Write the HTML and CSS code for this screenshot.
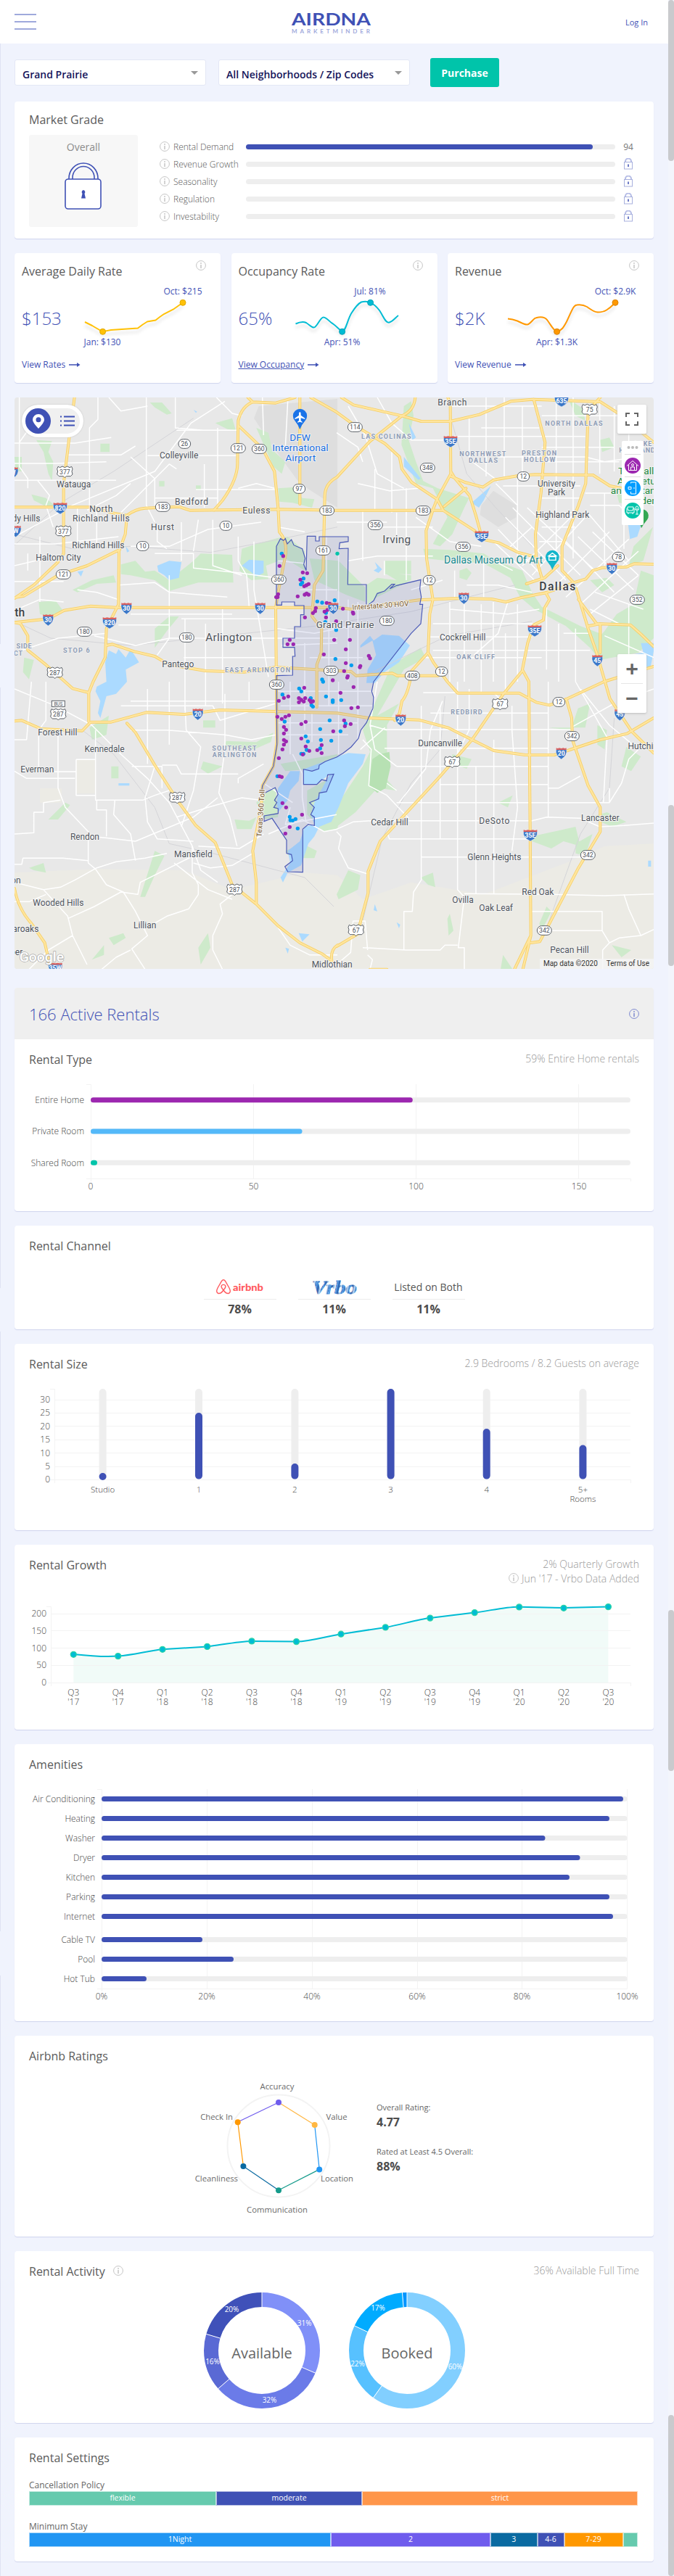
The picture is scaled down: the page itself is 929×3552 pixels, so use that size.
FILE: index.html
```html
<!DOCTYPE html>
<html lang="en">
<head>
<meta charset="utf-8">
<title>AirDNA MarketMinder - Grand Prairie</title>
<link rel="stylesheet" href="styles.css">
</head>
<body>
<svg class="sprite" width="0" height="0" aria-hidden="true">
  <defs>
    <symbol id="info" viewBox="0 0 14 14"><circle cx="7" cy="7" r="6.4" fill="none" stroke="currentColor"/><circle cx="7" cy="4" r=".9" fill="currentColor"/><path d="M7 6v5" stroke="currentColor" stroke-width="1.5"/></symbol>
    <symbol id="lock" viewBox="0 0 12 16"><path d="M2 6V4.500a4 4 0 0 1 8 0V6" fill="none" stroke="#b6bde6" stroke-width="2"/><rect x=".5" y="5.500" width="11" height="9.500" fill="#fff" stroke="#a8b0de"/><path d="M6 8.500v3.500" stroke="#3f51b5" stroke-width="1.500"/></symbol>
    <symbol id="arrow" viewBox="0 0 16 8"><path d="M0 4H14" stroke="currentColor" stroke-width="1.400"/><path d="M11 1l4.500 3L11 7z" fill="currentColor"/></symbol>
    <g id="sr2"><rect x="-25" y="-19" width="50" height="38" rx="19" fill="#fff" stroke="#5a5f66" stroke-width="3"/></g>
    <g id="sr3"><rect x="-30" y="-19" width="60" height="38" rx="19" fill="#fff" stroke="#5a5f66" stroke-width="3"/></g>
    <g id="us"><path d="M-28-22l8 4 10-5 10 5 10-5 10 5 8-4 4 10-3 10 3 12-8 8H6L0 24l-6-6h-18l-8-8 3-12-3-10z" fill="#fff" stroke="#5a5f66" stroke-width="3"/></g>
    <g id="ih"><path d="M-22-15H22Q26 8 0 25-26 8-22-15z" fill="#3c78c8" stroke="#fff" stroke-width="1.500"/><path d="M-21-22l6 2 7-2 8 2 8-2 7 2 6-2v8h-42z" fill="#d9605f"/></g>
    <g id="ih3"><path d="M-29-15H29Q31 10 0 25-31 10-29-15z" fill="#3c78c8" stroke="#fff" stroke-width="1.500"/><path d="M-28-22l9 2 9-2 10 2 10-2 9 2 9-2v8h-56z" fill="#d9605f"/></g>
  </defs>
</svg>
<i class="edge edge-a"></i><i class="edge edge-b"></i><i class="edge edge-c"></i><i class="edge edge-d"></i>
<div class="track"><i class="thumb thumb-a"></i><i class="thumb thumb-b"></i><i class="thumb thumb-c"></i><i class="thumb thumb-d"></i></div>

<header class="topbar">
  <div class="menu"><i></i><i></i><i></i></div>
  <div class="brand"><svg width="112" height="40"><text class="logo-main" x="1" y="24.500" textLength="109" lengthAdjust="spacingAndGlyphs">AIRDNA</text><text class="logo-sub" x="1" y="36" textLength="108">MARKETMINDER</text></svg></div>
  <a class="login">Log In</a>
</header>

<main>
  <div class="filters">
    <div class="select">Grand Prairie<i></i></div>
    <div class="select">All Neighborhoods / Zip Codes<i></i></div>
    <button class="purchase">Purchase</button>
  </div>

  <section class="card grade">
    <h2>Market Grade</h2>
    <div class="grade-body">
      <div class="overall"><span>Overall</span>
        <svg width="52" height="65" viewBox="0 0 52 65"><g fill="none" stroke="#3f51b5" stroke-width="1.600"><path d="M6 23V22a20 21 0 0 1 40 0v1M11 23V21a15 15.500 0 0 1 30 0v2"/><rect x="1" y="23" width="49" height="41" rx="4" fill="#fff"/></g><path d="M26 38a3 3 0 0 1 1.500 5l1.500 6.500h-6l1.500-6.500A3 3 0 0 1 26 38z" fill="#3f51b5"/></svg>
      </div>
      <div class="grades">
        <div class="row"><svg class="ic"><use href="#info"/></svg><span>Rental Demand</span><div class="bar"><i style="width:94%"></i></div><b>94</b></div>
        <div class="row"><svg class="ic"><use href="#info"/></svg><span>Revenue Growth</span><div class="bar"></div><svg class="lk"><use href="#lock"/></svg></div>
        <div class="row"><svg class="ic"><use href="#info"/></svg><span>Seasonality</span><div class="bar"></div><svg class="lk"><use href="#lock"/></svg></div>
        <div class="row"><svg class="ic"><use href="#info"/></svg><span>Regulation</span><div class="bar"></div><svg class="lk"><use href="#lock"/></svg></div>
        <div class="row"><svg class="ic"><use href="#info"/></svg><span>Investability</span><div class="bar"></div><svg class="lk"><use href="#lock"/></svg></div>
      </div>
    </div>
  </section>

  <div class="kpis">
    <section class="card kpi">
      <div class="kpi-head"><h2>Average Daily Rate</h2><svg class="ic"><use href="#info"/></svg></div>
      <div class="kpi-body"><strong>$153</strong>
        <svg width="190" height="100" viewBox="100 389 190 100"><path class="spark" stroke="#ffc107" d="M117 444L127 449Q137 455 141.600 457.300L153 455 190 452.500Q197 447 203 443.500L214.500 441.500Q220 437 226 433L239 426.500 252 417.300"/><circle cx="141.600" cy="457.300" r="4" fill="#ffc107" stroke="#e0a800"/><circle cx="252" cy="417.300" r="4" fill="#ffc107" stroke="#e0a800"/><text class="mk" x="252" y="406">Oct: $215</text><text class="mk" x="141" y="476">Jan: $130</text></svg></div>
      <a class="more"><span>View Rates</span><svg><use href="#arrow"/></svg></a>
    </section>
    <section class="card kpi">
      <div class="kpi-head"><h2>Occupancy Rate</h2><svg class="ic"><use href="#info"/></svg></div>
      <div class="kpi-body"><strong>65%</strong>
        <svg width="190" height="100" viewBox="399 389 190 100"><path class="spark" stroke="#00bcd4" d="M407.500 446.500C413 444 418 443 422 445C428 449 431 453 434 451C439 447 442 437 446 437.500C451 438 454 444 459 446.500C464 450 468 455 471.600 457.300C477 456 479 440 484.600 431.500C490 423 494 418.500 498 416.500Q505 414.500 510.600 417.300C517 420 520 424 523 428C529 437 531 445 536 444.700C541 444 545 438 549 435"/><circle cx="471.600" cy="457.300" r="4" fill="#00bcd4" stroke="#00a0b5"/><circle cx="510.600" cy="417.300" r="4" fill="#00bcd4" stroke="#00a0b5"/><text class="mk" x="510" y="406">Jul: 81%</text><text class="mk" x="471.500" y="476">Apr: 51%</text></svg></div>
      <a class="more"><span class="u">View Occupancy</span><svg><use href="#arrow"/></svg></a>
    </section>
    <section class="card kpi">
      <div class="kpi-head"><h2>Revenue</h2><svg class="ic"><use href="#info"/></svg></div>
      <div class="kpi-body"><strong>$2K</strong>
        <svg width="190" height="100" viewBox="697 389 190 100"><path class="spark" stroke="#ff9800" d="M700 439.500C706 440 709 441 713 442.500C719 445 723 448 727 447.500C732 446 735 439 739 438.300Q749 435.500 754 441C760 449 763 456 767.600 457.300C774 456 777 451 781 443.500C788 429 790 421 795 420.500Q803 419.500 809 423C815 427 818 430 824 430.500Q831 430.500 836 427.500C842 424 845 420 848 417.300"/><circle cx="767.600" cy="457.300" r="4" fill="#ff9800" stroke="#d98200"/><circle cx="848" cy="417.300" r="4" fill="#ff9800" stroke="#d98200"/><text class="mk" x="848" y="406">Oct: $2.9K</text><text class="mk" x="767.500" y="476">Apr: $1.3K</text></svg></div>
      <a class="more"><span>View Revenue</span><svg><use href="#arrow"/></svg></a>
    </section>
  </div>

  <section class="map">
    <svg width="881" height="788" viewBox="20 548 881 788">
      <rect x="20" y="548" width="881" height="788" fill="#e8e8e8"/>
      <g transform="translate(0 540) scale(.33333)">
        <g fill="#ecebe5"><path d="M60 1990L400 1975 760 1980 960 2060 1260 1990 1395 2000 1500 2100 1700 2030 2000 2080 2340 1950 2500 1880 2703 1870V2400H60z"/><path d="M315 1522h80v140h-80zM165 1640h90v60h-90z"/></g>
        <g fill="#dedede"><path d="M1070 60L1395 30V480L1240 380 1130 230 1050 110zM1990 470L2040 410 2135 470 2135 520 2060 560 1985 510z"/></g>
        <g fill="#ceeacb">
          <path d="M150 200L215 205 200 250 220 290 215 370 200 340 180 250zM60 270h30v60H65zM130 425L190 440 225 470 200 480 140 450z"/>
          <path d="M620 45L670 45 710 90 690 95 640 65zM890 130L960 110 975 160 940 155zM1060 150L1110 170 1125 240 1180 290 1165 340 1130 310zM1150 400L1220 395 1250 440 1300 445 1290 480 1210 460 1155 455z"/>
          <path d="M415 215h38v35h-38zM658 370h22v22h-22zM810 388h20v20h-20zM500 715L560 700 600 745 640 740 700 780 800 700 830 670 960 675 965 790 820 790 750 810 700 825 640 780 540 760 500 755z"/>
          <path d="M1000 650L1060 630 1150 605 1190 600 1260 660 1260 740 1180 690 1100 720 1110 775 1040 780 990 740zM160 870L230 865 260 905 200 930 165 920zM300 820L380 780 470 760 480 790 400 795 320 830z"/>
          <path d="M640 980L700 930 740 930 690 990 640 1060zM100 1100L140 1110 120 1190 95 1160zM1280 690L1400 700 1510 810 1510 870 1430 840 1300 780z"/>
          <path d="M1670 60L1700 40 1710 100 1690 200 1720 290 1750 370 1810 400 1940 440 1920 480 1870 590 1820 640 1790 630 1850 520 1790 400 1720 380 1660 220z"/>
          <path d="M1750 650L1860 655 2000 670 2050 700 2160 740 2200 830 2240 890 2400 970 2480 1000 2500 1050 2440 1060 2340 970 2210 900 2150 850 2110 770 2000 710 1850 700 1760 690z"/>
          <path d="M1560 770L1640 780 1590 750 1700 760 1700 780 1560 850 1520 880 1515 800zM1590 700h110v55h-110zM1900 740l30-10 20 20-20 30-30-10zM2440 780l70-10 30 30-50 30z"/>
          <path d="M2550 920L2620 880 2650 740 2703 760V1020L2640 1080 2480 1110 2440 1060 2500 990zM2620 640L2700 560 2660 700 2600 720zM2480 200l40-10 20 40-50 20zM2550 420l80 10-10 40-60-10zM2350 30l60 40 10 50-40-20z"/>
          <path d="M1620 1130L1740 1060 1760 1100 1670 1150 1560 1340 1650 1290 1600 1380 1600 1510 1560 1560 1640 1650 1560 1640 1470 1740 1392 1800 1310 1810 1400 1700 1500 1550 1530 1490 1500 1400z"/>
          <path d="M1160 1540L1395 1500 1395 1520 1300 1560 1180 1570zM1090 1660L1140 1640 1150 1760 1090 1770 1060 1700zM1270 1650L1380 1590 1340 1680 1300 1780 1270 1750zM1400 1780L1395 1810 1340 1820 1310 1790z"/>
          <path d="M935 1445L1060 1450 1130 1410 1120 1450 1050 1480 930 1470zM970 1770L1030 1775 1060 1760 1040 1810 980 1810zM1180 1900L1250 1870 1310 1900 1300 1930 1200 1930z"/>
          <path d="M200 1770L270 1700 290 1710 240 1770zM370 1390L450 1340 440 1420 380 1440zM120 1970L180 1950 190 1990 140 1980zM580 2090L640 1900 680 1920 640 2000 600 2090zM380 2350L430 2290 430 2330zM450 2260l60-20 10 20-50 30zM820 2300l40-60 10 60-40 70zM460 1550h30v50h-30zM840 1360h50v30h-50z"/>
          <path d="M1392 2080L1440 1980 1490 2000 1480 2060 1400 2100zM1740 2010l50-20 10 60-30-10zM2200 1840L2380 1800 2400 1880 2330 1860 2280 1890 2200 1860zM2380 1870L2450 1830 2420 1920 2380 1910zM2440 1760l70-20 80 40-60 20zM2060 1700l60-30-20 50zM2470 1380l40 20-10 80-30-20z"/>
          <path d="M2270 1390L2420 1390 2440 1290 2390 1310 2360 1400zM2590 1470l60 40-40 60-40-20zM2260 2130l20 20-40 80-10-30zM1860 2160l15 70-20 20-5-70zM2080 2330l40 60h-50zM1870 1500l80 20-20 40-60-20zM2530 2290l80 20-40 30zM840 1530l80 20-60 30-30-20z"/>
        </g>
        <path d="M1540 1520L1570 1500 1610 1490 1615 1550 1595 1640 1560 1660 1525 1630z" fill="#b7e1b3"/>
        <g fill="#abdaff">
          <path d="M450 1070L480 1085 490 1065 520 1100 540 1065 575 1120 520 1150 525 1200 480 1250 440 1260 415 1350 405 1330 415 1280 395 1240 400 1220 440 1200 435 1120zM650 720L700 700 750 705 740 770 700 780 680 760 655 745zM1000 720L1030 695 1090 700 1090 750 1060 765 1030 740zM320 745l25-5-10 25zM520 640l15 20-10 5zM800 75l15 8-5 5z"/>
          <path d="M1490 1050L1530 1010 1545 1030 1580 1005 1650 1010 1695 1050 1650 1120 1590 1160 1550 1205 1515 1205 1520 1150 1555 1090 1540 1030 1490 1060z"/>
          <path d="M1255 1562L1395 1510 1440 1495 1512 1500 1500 1540 1440 1620 1400 1720 1370 1780 1320 1800 1300 1840 1275 1870 1245 1960 1190 1990 1170 2030 1160 2010 1200 1950 1190 1900 1240 1860 1260 1800 1300 1790 1285 1750 1300 1700 1365 1580 1310 1625 1255 1625z"/>
          <path d="M1150 1640L1200 1570 1240 1570 1235 1610 1200 1650 1190 1690 1150 1740 1145 1700zM1550 705l30 30-15 15-20-10 15-10zM1950 460L2030 390 2000 450 1980 480zM2600 1090l60-10-10-40 60 0-20 100-40 10zM1670 270L1740 360 1730 365 1670 310zM1690 130l30 60-15 10zM2595 530l60 10-20 60-30 10z"/>
          <path d="M490 1620h45v10h-45zM1235 2240l45 5-30 30zM1180 2300l15 5-5 20zM1640 2195l15 10-5 15zM2680 1940h12v25h-12zM1550 2120l10 30-15-5z"/>
        </g>
        <g class="rail"><path d="M60 635L250 460 470 330 800 110M60 590L300 650 540 640 870 665 1160 610 1395 560M60 950L210 1020 540 1050 1300 970 1700 910 2130 800M1500 1180L1850 1010 2200 950M340 1400L470 1500 640 1720 700 1870 880 1910 1260 2010 1380 2130M1870 130L1930 340 2050 480 2200 640M1840 1260L1820 1480 1700 1620 1580 1850 1500 2190M2540 1350L2520 1640 2400 1830 2260 2220"/></g>
        <g class="minor">
          <path d="M60 213H310L460 190M60 297H230L440 290M60 367H480M280 262H500L560 225M610 265H985M730 160H985M725 24V150L840 160M810 405H1140M640 440H900M60 630H230L490 600M640 670H800V730L990 750 1140 770M540 920H960M490 965H700M750 940H1140M60 1080L240 1020 440 1000M390 1010L560 1050 700 1020H1395M760 1100H1140M60 785H263M60 905L165 860 263 870M320 820L400 830 490 860"/>
          <path d="M80 24V310L115 360V400M130 140L80 210M155 367L205 430 190 470 220 560M405 24V115L370 150V500M450 24L500 80 610 60M605 24V470L640 540M895 24L960 90 1000 100M845 300V480M900 150V480M650 570V620L690 650M750 540V700M700 760V1020L650 1090M765 940V1320M850 960V1200M920 900V1290M985 600V700L1020 760 1030 890M1050 620V820L1110 1180M165 600V870M115 670V740M320 480V640M400 480V640M540 270L640 360 640 470M820 530L800 660M730 320L700 300 500 500"/>
          <path d="M60 600L300 470 640 330 790 130 930 40M60 720L230 680M540 640L700 640 860 570 1080 540M490 800L640 790 700 830 940 850M540 380L480 430 360 490M985 400L1060 380 1135 400M1085 24L1090 180M880 530V720L1000 760M1150 560L1260 580M1190 40L1180 230"/>
          <path d="M1392 170L1480 230 1500 290M1440 60L1510 180 1560 340 1670 400M1560 24L1620 130 1700 200H1862M1480 380L1610 410 1730 400M1620 250V500M1680 400V780M1550 320V490M1500 490V700M1440 700L1560 680 1790 680M1560 560H1790M1640 500V620M1590 700V760M1392 540H1600M1720 520L1860 620 1990 640"/>
          <path d="M1862 60H2240M1862 185H2420M1940 100V280L2060 370M2010 24V350M2085 24V350M2160 60V350M2300 24V350M2370 24V690M2480 24V340M2540 60V330M2600 100V300M1990 150H2230M2240 100H2600M2240 230H2540M2240 290H2560M2060 270H2420M2420 420H2560L2703 470M2080 390H2400M2140 350V690M2300 350V690M2240 440H2400M2240 500H2400M2240 560H2380M2230 620H2340M2050 380L2140 470V500M2420 270L2500 290 2640 270M2440 470H2560L2620 530M2580 400V650M2500 420V720M2420 490L2600 700"/>
          <path d="M2090 520L2340 780M2120 480L2400 760M2180 480L2460 740M2060 570L2240 760M2040 620L2210 780M2340 620L2540 830M2390 600L2620 820M2450 580L2640 760M2200 760L2420 520M2160 720L2380 500M2300 800L2520 580M2340 850L2600 610M2400 880L2640 660M2440 920L2640 760M2100 650L2200 560M2460 830L2660 900M2040 700L2120 740"/>
          <path d="M1790 960H2220M1780 1015H2200M1790 1070H2440M1760 1100H2240M1860 870V1200M1920 880V1200M1990 880V1250M2040 870V1200M2090 1000V1250M2140 880V1200M2260 880V1150M2310 960V1200M2380 980V1200M1860 900L2100 920 2230 900M1930 800H2060L2200 830M1880 740V860M2000 680V850M2440 900L2560 960M2500 1010L2703 1100M2600 880V1090M2330 1000H2440M1830 780L1700 820M2100 870L2060 1000 1960 1090"/>
          <path d="M1145 980L1300 1000 1500 960M1350 600V880M1400 670V900M1165 1050L1395 1040M1150 700L1260 710M1240 820H1395M1260 1040V1400M1360 900V1300M1440 860V1200M1480 870V1440M1280 1100H1500M1150 1240H1540M1160 1300H1540M1150 1370H1480M1180 1420H1440M1200 1200V1500M1400 1200V1500M1290 1330V1450M1210 1500L1250 1580 1250 1680 1265 1780M1090 1620L1210 1700M1200 1720L1180 1790 1392 1750M1110 1830L1250 1770 1340 1820 1395 1810"/>
          <path d="M60 1230L230 1300 380 1380 500 1500 610 1600 700 1700 795 1880 830 1980 900 2030M190 1200V1360L160 1400V1570M60 1440H110L130 1200M240 1400V1640L270 1720 365 1820V1950L395 1975 440 2040 510 2070 560 2150 600 2230 610 2250 545 2305 600 2390M60 1570L110 1600H310M315 1522H395V1670H315V1522M225 1572H315M395 1400V1690H590L640 1670 700 1650M60 1830L140 1825V1740L180 1740V1700L250 1690M365 1840L430 1845 560 1860 800 1760 900 1680M400 1690V1730H440V1840M475 1690L470 1750 540 1830 560 1940"/>
          <path d="M500 1300H880L910 1360 1140 1290M540 1280H1140M540 1400H690L930 1420 1040 1440 1140 1420M545 1550H670V1640M670 1545H730L750 1582H985M610 1230V1540M700 1200V1460M765 1300L770 1400 830 1470 800 1650 750 1800M850 1200V1300M930 1250V1480L905 1660 950 1760 980 1880M1030 1200V1280M985 1620V1600L1090 1540M730 1760L860 1720 1000 1680 1075 1690M640 1550L600 1680 610 1780 650 1850 800 1860M820 1880L990 1890 1090 1830M720 1950L860 2060 960 2100M800 1950L870 1970 960 1960 1045 1910M795 1880V1990L820 2040V2080L780 2140 690 2170 620 2210"/>
          <path d="M60 2030L180 2060 250 2050 310 2020 400 1970 480 1945 600 1930 690 1910M180 2060L280 2170 300 2250 360 2370M280 2180L390 2130 500 2070 570 2080 580 2030 800 1920M60 2110L120 2110 190 2080M60 1955H90L95 1930H260L365 1940M120 2390L200 2310 300 2250M420 2390L480 2340 540 2310M960 2080L910 2120 920 2160 880 2250V2310L920 2390M1145 2210L1200 2290 1280 2330 1395 2330"/>
          <path d="M1742 1300V2020L1710 2070 1705 2150H1670V2310M1820 1300V1850H1610L1600 1820M1892 1200V2060L1920 2090 1895 2300H1920V2390M1968 1550V2075M2042 1440V2075M2117 1300V1400L2140 1720 2117 1900M2267 1200V1760M1590 1398H2362M1590 1475H2267M1640 1550H2267M1820 1625H2267M1640 1700H2520V1640M1540 1775H2200L2260 1760 2400 1765 2480 1800 2580 1795 2703 1785M1610 1850H2190M1742 1925H2400M1920 2077L2280 2080 2500 2085 2703 2078M2190 2150H2490V2230L2520 2280 2492 2310V2390M2260 2230H2490M2520 2280L2560 2260 2650 2250 2703 2225"/>
          <path d="M1500 1440L1535 1480 1525 1630 1600 1670 1690 1765M1392 1810L1460 1780 1540 1775M1392 1820L1410 1840 1400 1890 1440 1970 1520 1995M1530 1380L1550 1480 1640 1550M1560 1200L1530 1380 1600 1400M1490 1480L1592 1390M1600 1620L1640 1650M1650 1700L1760 1560 1780 1400 1830 1280M1750 1245H2040L2100 1300M1780 1330H2267M1940 1230V1400L1890 1500M2360 1390L2540 1290M2380 1200L2510 1430 2495 1700M2640 1480L2600 1520 2570 1620 2520 1700M2267 1640H2310L2400 1590M2600 1290L2620 1260 2703 1230M2400 1230L2520 1380 2640 1480"/>
          <path d="M1392 2370L1450 2320 1460 2190H1510L1520 2310M1500 2300L1680 2310 1820 2310 1840 2290 1892 2290M2580 2080L2600 2140 2650 2250M1520 2330L1540 2350 1530 2390"/>
        </g>
        <defs><g id="hw">
          <path d="M308 24L285 200 263 380V670L240 705 140 800 60 855M60 478H380L480 505 525 512Q560 485 600 482L740 476 785 491 1150 487 1395 491H1832L1962 575 1992 610 2062 625 2142 665 2207 682M525 512L518 590 492 660 490 880 440 980 435 1100 385 1200 367 1245V1365M60 852L100 845 240 760 360 720 492 655M60 955L200 940 265 905 375 887 480 893H1392L1452 900 1732 862 1892 855 2032 858 2092 870 2152 853 2257 832 2322 810 2372 790 2422 775 2452 740 2492 728 2592 725 2622 712 2703 714"/>
          <path d="M885 490L920 450Q985 360 982 290L985 120Q1000 60 1045 43L1140 47 1220 24M1025 24L1045 43M985 140L1085 235 1135 330 1150 480 1155 580Q1190 620 1180 680L1150 830 1140 893 1145 1450 1130 1550 1085 1630 1080 1720 1045 1900 1060 2030V2115M1240 24V465M1530 205L1392 355Q1345 380 1343 430L1336 740 1300 800 1290 930 1330 980 1328 1080 1310 1130V1305M440 1050L465 1045 555 1075 640 1095 700 1130 850 1155 1010 1160 1140 1140 1452 1158 1472 1175 1622 1165 1642 1175H1812M60 955L85 960 115 1010V1070L190 1130 300 1228 367 1245M1285 24L1392 85 1467 140 1592 215 1652 270 1662 320 1702 375 1807 445 1832 490"/>
          <path d="M1412 24L1462 55 1662 100 1742 123H1862L1982 95 2112 40 2202 32 2482 42 2557 90 2703 210M1530 205L1662 100Q1712 80 1717 24M1852 24L1862 50 1864 340 1807 445 1790 490 1762 575 1764 690 1790 860 1777 920 1770 1080 1792 1120 1850 1200 1892 1247H2147L2217 1285 2272 1297 2342 1272 2497 1200 2703 1137M1864 330L1882 360 1942 430 1967 510 1992 600M1864 350L1922 375 1997 395 2042 365 2142 348 2212 343 2452 345 2522 390 2572 400M1927 400L1837 475M2207 32L2254 210 2237 420 2214 590 2217 690 2242 775M2482 24L2432 80 2422 380 2392 470 2324 640V740L2372 790"/>
          <path d="M2177 795L2252 770 2307 720M2257 832L2272 860 2252 895 2247 945 2207 965 2182 1040 2160 1150 2187 1200 2192 1800 2195 2250 2127 2390M2160 1155L2082 1250 1952 1440 1812 1600 1692 1730 1572 1860 1522 1985V2075L1477 2245 1392 2295M2382 815L2432 980 2467 1080 2522 1270 2612 1405 2703 1495M2392 860L2467 960 2607 965 2652 1005 2703 1055M2432 970L2482 960V1080M1770 1080L1702 1155Q1690 1250 1662 1280L1652 1330 1632 1360M2195 2250L2162 2390"/>
          <path d="M60 1363L90 1360 170 1395 340 1403 375 1367H460L605 1327 760 1335 910 1317 1395 1330 1522 1350 1732 1358 1852 1390 1952 1440 2042 1485 2172 1503H2292L2482 1440 2592 1415 2703 1350M525 1372L560 1410 640 1545 740 1700 810 1795 890 1865 960 2040 1060 2120 1150 2210 1240 2280 1330 2325 1372 2355M1395 2290Q1365 2310 1372 2355M60 2055Q75 2140 130 2200L185 2280 210 2390M2342 1272L2364 1350 2367 1440 2432 1630 2482 1720V1820L2392 1970 2272 2200 2232 2275 2195 2280M1530 2390H1600"/>
        </g></defs>
        <use href="#hw" class="case"/><use href="#hw" class="core"/>
        <path class="city" d="M1143 640L1160 608 1172 616 1180 608 1188 630 1205 612 1215 635 1250 650 1262 690 1256 715 1266 740 1270 598H1305V618H1320V600H1440V620L1405 625 1402 650 1440 648 1438 798H1515V888L1545 865 1560 835 1590 825 1620 797 1632 797 1612 815 1640 802 1740 778 1736 815 1742 850 1736 880 1748 880 1740 960 1700 1000 1545 1200 1537 1240 1545 1265 1542 1310 1515 1370 1492 1400 1482 1435 1452 1470 1420 1495 1392 1512 1345 1530 1320 1545 1318 1560 1290 1570 1255 1562V1625H1310L1330 1605 1350 1610 1355 1585 1380 1582 1360 1630 1350 1655 1320 1660 1318 1685 1280 1700 1300 1720 1285 1750 1300 1760 1300 1795 1275 1790 1252 1810V1988L1190 1986 1178 1965 1210 1940 1205 1915 1185 1910V1855L1125 1765 1092 1778V1755L1150 1745 1150 1725 1132 1720 1145 1700 1135 1690 1150 1665 1138 1638 1080 1668 1085 1630 1130 1550 1145 1460 1143 1175 1210 1173V1095H1220L1218 1058H1170V1020H1218V972H1243V923H1257V885H1218V870H1165V883H1143z"/>
        <g class="dots">
          <path stroke="#009dee" d="M1165 670h0M1255 773h0M1250 790h0M1244 797h0M1312 868h0M1332 873h0M1384 863h0M1348 915h0M1345 953h0M1390 986h0M1387 1106h0M1332 1191h0M1453 1132h0M1336 1200h0M1237 1228h0M1246 1240h0M1168 1253h0M1348 1261h0M1376 1277h0M1376 1284h0M1285 1268h0M1288 1297h0M1294 1303h0M1177 1365h0M1363 1360h0M1324 1396h0M1264 1426h0M1273 1447h0M1327 1441h0M1370 1444h0M1324 1476h0M1268 1482h0M1246 1498h0M1255 1498h0M1147 1591h0M1198 1759h0M1201 1773h0M1210 1774h0M1222 1768h0M1231 1807h0M1411 1276h0M1429 1373h0M1408 1405h0"/>
          <path stroke="#9c27b0" d="M1171 680h0M1156 721h0M1252 748h0M1270 751h0M1242 778h0M1276 796h0M1258 805h0M1267 801h0M1231 847h0M1260 840h0M1268 835h0M1276 840h0M1150 838h0M1142 850h0M1148 850h0M1261 934h0M1306 895h0M1303 908h0M1294 916h0M1342 910h0M1354 903h0M1366 886h0M1351 874h0M1363 877h0M1348 934h0M1390 950h0M1198 1027h0M1189 1045h0M1213 1045h0M1382 1027h0M1339 1087h0M1376 1194h0M1418 898h0M1459 913h0M1461 918h0M1447 1027h0M1430 1066h0M1525 1093h0M1530 1103h0M1430 1123h0M1488 1140h0M1490 1135h0M1423 1156h0M1436 1183h0M1438 1177h0M1258 1225h0M1192 1261h0M1174 1267h0M1153 1279h0M1236 1268h0M1246 1275h0M1236 1285h0M1262 1268h0M1256 1282h0M1280 1276h0M1286 1284h0M1294 1281h0M1147 1345h0M1165 1354h0M1180 1345h0M1195 1339h0M1246 1375h0M1264 1366h0M1174 1387h0M1183 1399h0M1174 1414h0M1174 1441h0M1183 1447h0M1174 1460h0M1168 1480h0M1378 1405h0M1246 1435h0M1264 1468h0M1330 1462h0M1279 1486h0M1312 1483h0M1330 1495h0M1252 1501h0M1153 1516h0M1156 1591h0M1165 1594h0M1168 1702h0M1183 1720h0M1249 1750h0M1198 1801h0M1180 1828h0M1462 1222h0M1408 1246h0M1453 1309h0M1480 1306h0M1423 1360h0M1450 1375h0M1426 1384h0"/>
          <path stroke="#00c4aa" d="M1395 670h0"/>
        </g>
        <g class="shields">
          <g transform="translate(763 216)"><use href="#sr2"/><text>26</text></g><g transform="translate(985 234)"><use href="#sr3"/><text>121</text></g><g transform="translate(1072 237)"><use href="#sr3"/><text>360</text></g><g transform="translate(1237 402)"><use href="#sr2"/><text>97</text></g><g transform="translate(673 477)"><use href="#sr3"/><text>183</text></g><g transform="translate(1352 492)"><use href="#sr3"/><text>183</text></g><g transform="translate(934 555)"><use href="#sr2"/><text>10</text></g><g transform="translate(590 639)"><use href="#sr2"/><text>10</text></g><g transform="translate(262 756)"><use href="#sr3"/><text>121</text></g><g transform="translate(1153 778)"><use href="#sr3"/><text>360</text></g><g transform="translate(1336 657)"><use href="#sr3"/><text>161</text></g><g transform="translate(349 993)"><use href="#sr3"/><text>180</text></g><g transform="translate(772 1017)"><use href="#sr3"/><text>180</text></g><g transform="translate(1369 1155)"><use href="#sr3"/><text>303</text></g><g transform="translate(1144 1212)"><use href="#sr3"/><text>360</text></g>
          <g transform="translate(1468 147)"><use href="#sr3"/><text>114</text></g><g transform="translate(1768 315)"><use href="#sr3"/><text>348</text></g><g transform="translate(2164 351)"><use href="#sr2"/><text>12</text></g><g transform="translate(1750 492)"><use href="#sr3"/><text>183</text></g><g transform="translate(1552 552)"><use href="#sr3"/><text>356</text></g><g transform="translate(1915 642)"><use href="#sr3"/><text>356</text></g><g transform="translate(1775 780)"><use href="#sr2"/><text>12</text></g><g transform="translate(1600 948)"><use href="#sr3"/><text>180</text></g><g transform="translate(2557 684)"><use href="#sr2"/><text>78</text></g><g transform="translate(2635 861)"><use href="#sr3"/><text>352</text></g><g transform="translate(1826 1158)"><use href="#sr2"/><text>12</text></g><g transform="translate(1705 1175)"><use href="#sr3"/><text>408</text></g><g transform="translate(2311 1284)"><use href="#sr2"/><text>12</text></g><g transform="translate(2365 1425)"><use href="#sr3"/><text>342</text></g><g transform="translate(2431 1917)"><use href="#sr3"/><text>342</text></g><g transform="translate(2251 2229)"><use href="#sr3"/><text>342</text></g>
          <g transform="translate(268 332)"><use href="#us"/><text>377</text></g><g transform="translate(262 578)"><use href="#us"/><text>377</text></g><g transform="translate(227 1163)"><use href="#us"/><text>287</text></g><g transform="translate(241 1335)"><use href="#us"/><text>287</text></g><g transform="translate(241 1291)"><rect x="-27" y="-12" width="54" height="24" fill="#fff" stroke="#5a5f66" stroke-width="3"/><text class="bus">BUS</text></g><g transform="translate(733 1680)"><use href="#us"/><text>287</text></g><g transform="translate(970 2060)"><use href="#us"/><text>287</text></g><g transform="translate(2438 75)"><use href="#us"/><text>75</text></g><g transform="translate(2068 1293)"><use href="#us"/><text>67</text></g><g transform="translate(1870 1532)"><use href="#us"/><text>67</text></g><g transform="translate(1472 2228)"><use href="#us"/><text>67</text></g>
        </g>
        <g class="inter">
          <g transform="translate(249 482)"><use href="#ih3"/><text>820</text></g><g transform="translate(453 956)"><use href="#ih3"/><text>820</text></g><g transform="translate(199 944)"><use href="#ih"/><text>30</text></g><g transform="translate(523 896)"><use href="#ih"/><text>30</text></g><g transform="translate(1076 896)"><use href="#ih"/><text>30</text></g><g transform="translate(1378 896)"><use href="#ih"/><text>30</text></g><g transform="translate(1918 854)"><use href="#ih"/><text>30</text></g><g transform="translate(2530 731)"><use href="#ih"/><text>30</text></g><g transform="translate(1863 206)"><use href="#ih3"/><text>35E</text></g><g transform="translate(1992 599)"><use href="#ih3"/><text>35E</text></g><g transform="translate(2211 989)"><use href="#ih3"/><text>35E</text></g><g transform="translate(2193 1835)"><use href="#ih3"/><text>35E</text></g><g transform="translate(2322 38)"><use href="#ih3"/><text>635</text></g><g transform="translate(2470 1112)"><use href="#ih"/><text>45</text></g><g transform="translate(2563 1336)"><use href="#ih"/><text>45</text></g><g transform="translate(818 1334)"><use href="#ih"/><text>20</text></g><g transform="translate(1657 1358)"><use href="#ih"/><text>20</text></g><g transform="translate(2321 1496)"><use href="#ih"/><text>20</text></g><g transform="translate(229 2385)"><use href="#ih3"/><text>35W</text></g><g transform="translate(53 335)"><use href="#ih"/><text>W</text></g><g transform="translate(65 577)"><use href="#ih"/><text>W</text></g>
        </g>
        <g class="places">
          <text x="740" y="276" textLength="160">Colleyville</text><text x="305" y="396" textLength="142">Watauga</text><text x="792" y="469" textLength="138">Bedford</text><text x="1060" y="504" textLength="114">Euless</text><text x="418" y="498" textLength="96">North</text><text x="418" y="537" textLength="236">Richland Hills</text><text x="672" y="574" textLength="96">Hurst</text><text x="406" y="648" textLength="216">Richland Hills</text><text x="241" y="699" textLength="186">Haltom City</text><text x="108" y="537">dy Hills</text><text class="l" x="946" y="1033" textLength="192">Arlington</text><text class="xl" x="82" y="930">th</text><text x="736" y="1140" textLength="132">Pantego</text>
          <text x="1870" y="57" textLength="120">Branch</text><text x="2301" y="393" textLength="156">University</text><text x="2301" y="429">Park</text><text x="2326" y="522" textLength="222">Highland Park</text><text class="l" x="1640" y="628" textLength="116">Irving</text><text class="xl" x="2305" y="823" textLength="150">Dallas</text><text class="l2" x="1427" y="978" textLength="240">Grand Prairie</text><text x="1913" y="1029" textLength="190">Cockrell Hill</text>
          <text x="238" y="1422" textLength="162">Forest Hill</text><text x="432" y="1491" textLength="165">Kennedale</text><text x="154" y="1575" textLength="138">Everman</text><text x="351" y="1854" textLength="120">Rendon</text><text x="799" y="1926" textLength="158">Mansfield</text><text x="241" y="2127" textLength="210">Wooded Hills</text><text x="599" y="2220" textLength="94">Lillian</text><text x="106" y="2235">aroaks</text><text x="66" y="2034">on</text><text x="68" y="2330">per</text><text x="1373" y="2382" textLength="168">Midlothian</text>
          <text x="1820" y="1467" textLength="182">Duncanville</text><text x="1611" y="1794" textLength="154">Cedar Hill</text><text x="2044" y="1789" textLength="126">DeSoto</text><text x="2482" y="1776" textLength="158">Lancaster</text><text x="2044" y="1938" textLength="222">Glenn Heights</text><text x="1914" y="2115" textLength="88">Ovilla</text><text x="2051" y="2148" textLength="140">Oak Leaf</text><text x="2224" y="2082" textLength="132">Red Oak</text><text x="2355" y="2322" textLength="160">Pecan Hill</text><text x="2668" y="1479">Hutchins</text>
          <g class="hood"><text x="1598" y="195" textLength="208">LAS COLINAS</text><text x="1997" y="267" textLength="194">NORTHWEST</text><text x="1999" y="294" textLength="122">DALLAS</text><text x="2230" y="264" textLength="146">PRESTON</text><text x="2232" y="290" textLength="132">HOLLOW</text><text x="2374" y="141" textLength="240">NORTH DALLAS</text><text x="2660" y="224">LAKE</text><text x="2644" y="251">HIGHLANDS</text><text x="1066" y="1161" textLength="272">EAST ARLINGTON</text><text x="317" y="1079" textLength="112">STOP 6</text><text x="100" y="1061">SIDE</text><text x="76" y="1091">CT</text><text x="970" y="1484" textLength="186">SOUTHEAST</text><text x="970" y="1511" textLength="184">ARLINGTON</text><text x="1930" y="1334" textLength="132">REDBIRD</text><text x="1968" y="1106" textLength="160">OAK CLIFF</text></g>
          <g class="blue"><text x="1241" y="204">DFW</text><text x="1242" y="246" textLength="232">International</text><text x="1243" y="288" textLength="126">Airport</text></g>
          <text class="teal" x="2040" y="710" textLength="408">Dallas Museum Of Art</text>
          <g class="green"><text x="2652" y="341">The Dallas</text><text x="2650" y="383">Arboretum</text><text x="2650" y="424">and Botanical</text><text x="2652" y="466">Garden</text></g>
          <text class="road" transform="translate(1574 895) rotate(-4)" textLength="234">Interstate 30 HOV</text><text class="road" transform="translate(1088 1745) rotate(-86)" textLength="196">Texas 360 Toll</text>
        </g>
        <path d="M1240 157Q1232 135 1219 120A29 29 0 1 1 1262 120Q1248 135 1240 157z" fill="#1a73e8"/><path d="M1240 84q4 0 4 8v6l17 12v4l-17-5v11l6 5v3l-10-3-10 3v-3l6-5v-11l-17 5v-4l17-12v-6q0-8 4-8z" fill="#fff"/>
        <path d="M2284 737Q2277 718 2264 704A28 28 0 1 1 2304 704Q2292 718 2284 737z" fill="#12b5cb"/><path d="M2268 680l16-12 16 12zm2 3h28v14h-28z" fill="none" stroke="#fff" stroke-width="4"/>
        <path d="M2652 565Q2648 545 2636 533A27 27 0 1 1 2676 530Q2662 545 2652 565z" fill="#34a853"/>
        <text class="google" x="80" y="2357" textLength="184" lengthAdjust="spacingAndGlyphs">Google</text>
      </g>
    </svg>
    <div class="toggle"><span><svg width="16" height="20" viewBox="0 0 16 20"><path fill="#fff" fill-rule="evenodd" d="M8 20Q0 11.500 0 8a8 8 0 0 1 16 0q0 3.500-8 12zM8 4.300a3.500 3.500 0 1 0 0 7 3.500 3.500 0 0 0 0-7z"/></svg></span><svg width="20" height="15" viewBox="0 0 20 15"><path d="M5 1.500h15M5 7.500h15M5 13.500h15M0 1.500h2M0 7.500h2M0 13.500h2" stroke="#3f51b5" stroke-width="1.800"/></svg></div>
    <div class="full"><svg width="18" height="18" viewBox="0 0 18 18"><path d="M1 6V1h5M12 1h5v5M17 12v5h-5M6 17H1v-5" fill="none" stroke="#666" stroke-width="2"/></svg></div>
    <div class="legend">
      <svg width="30" height="116" viewBox="0 0 30 116"><g fill="#bbb"><circle cx="9.500" cy="9" r="2"/><circle cx="15" cy="9" r="2"/><circle cx="20.500" cy="9" r="2"/></g><path d="M4 18.500h22M4 49.500h22M4 80.500h22" stroke="#ddd"/><circle cx="15" cy="34" r="11" fill="#9c27b0"/><circle cx="15" cy="65" r="11" fill="#009dff"/><circle cx="15" cy="96" r="11" fill="#00c4aa"/><g fill="none" stroke="#fff"><path d="M7 34.500L15 27.500 23 34.500M9.500 33v7.500h11V33M12.500 40v-4h5v4M13.500 33a1.500 1.500 0 1 1 3 0 1.500 1.500 0 1 1-3 0M12.500 58.500v-1.500h7v16h-7v-3M9 63.500h4v3H9zM17 64v2"/><path d="M8 93v-2h8v3M7 93q2 0 2 3h6q0-3 2-3v6H7zM9 99v2M15 99v2M21 92v9M18.500 95q0-5 2.500-5t2.500 5zM19 101h4"/></g></svg>
    </div>
    <div class="zoom"><span>+</span><i></i><span>−</span></div>
    <div class="attrib"><span>Map data ©2020</span><span>Terms of Use</span></div>
  </section>

  <section class="card rentals">
    <div class="banner"><h1>166 Active Rentals</h1><svg class="ic"><use href="#info"/></svg></div>
    <div class="head"><h2>Rental Type</h2><p>59% Entire Home rentals</p></div>
    <svg class="chart" width="881" height="165" viewBox="20 1485 881 165">
      <path class="grid" d="M119 1495.500H125.500V1629M349.500 1495V1626M573.500 1495V1626M797.500 1495V1626M119 1625.500H869.500V1629"/>
      <path class="rail-h" d="M128.500 1516.700H865.500M128.500 1560H865.500M128.500 1603.300H865.500"/>
      <g class="bars-h"><path stroke="#9c27b0" d="M128.500 1516.700H565.300"/><path stroke="#54b9f9" d="M128.500 1560H413"/><path stroke="#00c4aa" d="M128.500 1603.300H130.500"/></g>
      <g class="ax end"><text x="116" y="1521">Entire Home</text><text x="116" y="1564">Private Room</text><text x="116" y="1608">Shared Room</text></g>
      <g class="ax mid"><text x="125" y="1640">0</text><text x="349.500" y="1640">50</text><text x="573.500" y="1640">100</text><text x="798" y="1640">150</text></g>
    </svg>
  </section>

  <section class="card channel">
    <h2>Rental Channel</h2>
    <div class="cols">
      <div><span class="src"><svg width="66" height="22" viewBox="0 0 66 22"><path d="M10 15Q5.500 10 8 8q2-1.200 4 0 2.500 2-2 7-3.500 5-7 4.500Q-1 18 2 12L7.500 2.500Q10-1 12.500 2.500L18 12q3 6-1 7.500-3.500.5-7-4.500z" fill="none" stroke="#ff5a5f" stroke-width="1.400"/><text class="airbnb" x="23" y="15.500" textLength="42" lengthAdjust="spacingAndGlyphs">airbnb</text></svg></span><b>78%</b></div>
      <div><span class="src"><svg width="66" height="22" viewBox="0 0 66 22"><defs><linearGradient id="vg" x1="0" x2="9" y1="0" y2="2" gradientUnits="userSpaceOnUse" spreadMethod="repeat"><stop offset="0" stop-color="#6bb2f2"/><stop offset=".4" stop-color="#2458a8"/><stop offset=".7" stop-color="#bcdcf5"/><stop offset="1" stop-color="#2767bd"/></linearGradient></defs><text class="vrbo" x="2" y="20" textLength="62" lengthAdjust="spacingAndGlyphs" fill="url(#vg)" stroke="url(#vg)">Vrbo</text></svg></span><b>11%</b></div>
      <div><span class="src">Listed on Both</span><b>11%</b></div>
    </div>
  </section>

  <section class="card size">
    <div class="head"><h2>Rental Size</h2><p>2.9 Bedrooms / 8.2 Guests on average</p></div>
    <svg class="chart" width="881" height="175" viewBox="20 1905 881 175">
      <path class="grid" d="M69 1915.500H75.500V2045M76 1930.500H869M76 1948.500H869M76 1966.500H869M76 1985.500H869M76 2003.500H869M76 2022.500H869M69 2040.500H869.500V2045"/>
      <path class="rail-v" d="M141.600 1920V2034.600M274 1920V2034.600M406.400 1920V2034.600M538.600 1920V2034.600M670.700 1920V2034.600M803.400 1920V2034.600"/>
      <path class="bars-v" d="M141.600 2036V2036M274 1953V2034.600M406.400 2023V2034.600M538.600 1920V2034.600M670.700 1975V2034.600M803.400 1997.500V2034.600"/>
      <g class="ax end"><text x="69" y="1934">30</text><text x="69" y="1952">25</text><text x="69" y="1971">20</text><text x="69" y="1989">15</text><text x="69" y="2008">10</text><text x="69" y="2026">5</text><text x="69" y="2044">0</text></g>
      <g class="ax mid small"><text x="141.600" y="2058">Studio</text><text x="274" y="2058">1</text><text x="406.400" y="2058">2</text><text x="538.600" y="2058">3</text><text x="670.700" y="2058">4</text><text x="803.400" y="2058">5+</text><text x="803.400" y="2071">Rooms</text></g>
    </svg>
  </section>

  <section class="card growth">
    <div class="head"><h2>Rental Growth</h2><p>2% Quarterly Growth<br><svg class="ic"><use href="#info"/></svg> Jun '17 - Vrbo Data Added</p></div>
    <svg class="chart" width="881" height="155" viewBox="20 2205 881 155">
      <path d="M101.300 2281C120 2283 145 2285 162.700 2283.600C185 2282 205 2276 224 2274.300L285.600 2270.400C305 2268 330 2263 347 2262.900L408.500 2263.600C430 2263 450 2256 470 2253.200L531.300 2243.900C550 2241 575 2233 592.800 2231.100L654.200 2223.600C675 2221 700 2215 715.600 2215.700L777 2217.100 838.400 2215.400V2320.400H101.300z" fill="#f1fbf8"/>
      <path class="grid" d="M64 2215.500H70.500V2325M70 2225.500H869M70 2248.500H869M70 2272.500H869M70 2296.500H869M66 2320.500H869.500V2325"/>
      <path d="M101.300 2281C120 2283 145 2285 162.700 2283.600C185 2282 205 2276 224 2274.300L285.600 2270.400C305 2268 330 2263 347 2262.900L408.500 2263.600C430 2263 450 2256 470 2253.200L531.300 2243.900C550 2241 575 2233 592.800 2231.100L654.200 2223.600C675 2221 700 2215 715.600 2215.700L777 2217.100 838.400 2215.400" fill="none" stroke="#00bcd4" stroke-width="2"/>
      <g fill="#00bcd4" stroke="#2fd6a5" stroke-width="1.300"><circle cx="101.300" cy="2281.300" r="4"/><circle cx="162.700" cy="2283.600" r="4"/><circle cx="224" cy="2274.300" r="4"/><circle cx="285.600" cy="2270.400" r="4"/><circle cx="347" cy="2262.900" r="4"/><circle cx="408.500" cy="2263.600" r="4"/><circle cx="470" cy="2253.200" r="4"/><circle cx="531.300" cy="2243.900" r="4"/><circle cx="592.800" cy="2231.100" r="4"/><circle cx="654.200" cy="2223.600" r="4"/><circle cx="715.600" cy="2215.900" r="4"/><circle cx="777" cy="2217.300" r="4"/><circle cx="838.400" cy="2215.600" r="4"/></g>
      <g class="ax end"><text x="64" y="2229">200</text><text x="64" y="2253">150</text><text x="64" y="2277">100</text><text x="64" y="2300">50</text><text x="64" y="2324">0</text></g>
      <g class="ax mid"><text x="101.300" y="2338">Q3</text><text x="101.300" y="2351">'17</text><text x="162.700" y="2338">Q4</text><text x="162.700" y="2351">'17</text><text x="224" y="2338">Q1</text><text x="224" y="2351">'18</text><text x="285.600" y="2338">Q2</text><text x="285.600" y="2351">'18</text><text x="347" y="2338">Q3</text><text x="347" y="2351">'18</text><text x="408.500" y="2338">Q4</text><text x="408.500" y="2351">'18</text><text x="470" y="2338">Q1</text><text x="470" y="2351">'19</text><text x="531.300" y="2338">Q2</text><text x="531.300" y="2351">'19</text><text x="592.800" y="2338">Q3</text><text x="592.800" y="2351">'19</text><text x="654.200" y="2338">Q4</text><text x="654.200" y="2351">'19</text><text x="715.600" y="2338">Q1</text><text x="715.600" y="2351">'20</text><text x="777" y="2338">Q2</text><text x="777" y="2351">'20</text><text x="838.400" y="2338">Q3</text><text x="838.400" y="2351">'20</text></g>
    </svg>
  </section>

  <section class="card amenities">
    <h2>Amenities</h2>
    <svg class="chart" width="881" height="310" viewBox="20 2455 881 310">
      <path class="grid" d="M134 2467.500H140.500V2746M285.500 2467V2742M430.500 2467V2742M575.500 2467V2742M719.500 2467V2742M134 2742.500H864.500V2467"/>
      <path class="rail-h" d="M143.500 2480.500H861M143.500 2507.500H861M143.500 2534.500H861M143.500 2561.500H861M143.500 2588.500H861M143.500 2615.500H861M143.500 2642.500H861M143.500 2674.500H861M143.500 2701.500H861M143.500 2728.500H861"/>
      <path class="bars-h" stroke="#3f51b5" d="M143.500 2480.500H855.500M143.500 2507.500H836.500M143.500 2534.500H748M143.500 2561.500H796M143.500 2588.500H781.500M143.500 2615.500H836.500M143.500 2642.500H841.500M143.500 2674.500H275.500M143.500 2701.500H318.500M143.500 2728.500H198.500"/>
      <g class="ax end"><text x="131" y="2485">Air Conditioning</text><text x="131" y="2512">Heating</text><text x="131" y="2539">Washer</text><text x="131" y="2566">Dryer</text><text x="131" y="2593">Kitchen</text><text x="131" y="2620">Parking</text><text x="131" y="2647">Internet</text><text x="131" y="2679">Cable TV</text><text x="131" y="2706">Pool</text><text x="131" y="2733">Hot Tub</text></g>
      <g class="ax mid"><text x="140" y="2757">0%</text><text x="285" y="2757">20%</text><text x="430" y="2757">40%</text><text x="575" y="2757">60%</text><text x="719.500" y="2757">80%</text><text x="864.500" y="2757">100%</text></g>
    </svg>
  </section>

  <section class="card ratings">
    <h2>Airbnb Ratings</h2>
    <div class="rate-body">
      <svg width="224" height="195" viewBox="265 2865 224 195">
        <circle cx="384" cy="2959" r="70.500" fill="none" stroke="#f3f3f3" stroke-width="2"/>
        <g stroke-width="1.200"><path d="M384 2899L433.700 2930" stroke="#ffb742"/><path d="M433.700 2930L440.200 2991.400" stroke="#2196f3"/><path d="M440.200 2991.400L384 3020" stroke="#159b8b"/><path d="M384 3020L335.400 2987" stroke="#0a6aa1"/><path d="M335.400 2987L327.700 2926" stroke="#ff9800"/><path d="M327.700 2926L384 2899" stroke="#6f5ced"/></g>
        <circle cx="384" cy="2899" r="4" fill="#6f5ced"/><circle cx="433.700" cy="2930" r="4" fill="#ffb742"/><circle cx="440.200" cy="2991.400" r="4" fill="#2196f3"/><circle cx="384" cy="3020.200" r="4" fill="#159b8b"/><circle cx="335.400" cy="2987" r="4" fill="#0a6aa1"/><circle cx="327.700" cy="2926.300" r="4" fill="#ff9800"/>
        <g class="rt mid"><text x="382" y="2881">Accuracy</text><text x="382" y="3051">Communication</text></g>
        <g class="rt"><text x="449.500" y="2923">Value</text><text x="442" y="3008">Location</text></g>
        <g class="rt end"><text x="328" y="3008">Cleanliness</text><text x="321" y="2923">Check In</text></g>
      </svg>
      <div class="scores"><p>Overall Rating:<b>4.77</b></p><p>Rated at Least 4.5 Overall:<b>88%</b></p></div>
    </div>
  </section>

  <section class="card activity">
    <div class="head"><h2>Rental Activity <svg class="ic"><use href="#info"/></svg></h2><p>36% Available Full Time</p></div>
    <div class="donuts">
      <svg width="160" height="160" viewBox="-80 -80 160 160"><g class="ring" transform="rotate(-90)"><circle r="70" pathLength="100" stroke="#8090f8" stroke-dasharray="31.400 100"/><circle r="70" pathLength="100" stroke="#6b7be8" stroke-dasharray="32.200 100" stroke-dashoffset="-31.400"/><circle r="70" pathLength="100" stroke="#5a69d4" stroke-dasharray="16 100" stroke-dashoffset="-63.600"/><circle r="70" pathLength="100" stroke="#3f51b9" stroke-dasharray="20.400 100" stroke-dashoffset="-79.600"/></g><path class="cut" d="M0-60V-81M55.300 23.300L74.600 31.500M-45.100 39.500L-61 53.400M-57.600-16.900L-77.700-22.900"/><g class="pct"><text x="58.700" y="-34.500">31%</text><text x="10.500" y="72">32%</text><text x="-68" y="18.500">16%</text><text x="-41.500" y="-53">20%</text></g><text class="dn" y="10.500">Available</text></svg>
      <svg width="160" height="160" viewBox="-80 -80 160 160"><g class="ring" transform="rotate(-90)"><circle r="70" pathLength="100" stroke="#82cfff" stroke-dasharray="59.900 100"/><circle r="70" pathLength="100" stroke="#57c1ff" stroke-dasharray="22.100 100" stroke-dashoffset="-59.900"/><circle r="70" pathLength="100" stroke="#00abff" stroke-dasharray="16.700 100" stroke-dashoffset="-82"/><circle r="70" pathLength="100" stroke="#0095ff" stroke-dasharray="1.300 100" stroke-dashoffset="-98.700"/></g><path class="cut" d="M0-60V-81M-34.800 48.900L-47 66M-54.300-25.500L-73.300-34.500M-4.900-59.800L-6.600-80.700"/><g class="pct"><text x="66.500" y="25.500">60%</text><text x="-68" y="21.500">22%</text><text x="-40" y="-55">17%</text></g><text class="dn" y="10.500">Booked</text></svg>
    </div>
  </section>

  <section class="card settings">
    <h2>Rental Settings</h2>
    <h3>Cancellation Policy</h3>
    <div class="stack"><span style="width:258px;background:#66caae">flexible</span><span style="width:201px;background:#3f51b5">moderate</span><span style="width:380px;background:#ff964a">strict</span></div>
    <h3>Minimum Stay</h3>
    <div class="stack"><span style="width:416px;background:#2196f3">1Night</span><span style="width:220px;background:#6f5ced">2</span><span style="width:64.500px;background:#0a6aa1">3</span><span style="width:37px;background:#3f51b5">4-6</span><span style="width:81px;background:#ff9800">7-29</span><span style="width:20.500px;background:#66caae"></span></div>
  </section>
</main>
</body>
</html>
```
FILE: styles.css
```css
* { box-sizing: border-box; }
body { margin: 0; height: 3552px; position: relative; background: #f0f3fd; font-family: "Open Sans", sans-serif; color: #555; overflow: hidden; }
h1, h2, h3, p { margin: 0; font-weight: 400; }
svg { display: block; }
.sprite { position: absolute; }
.edge { position: absolute; left: 0; width: 1px; background: #dfe3f4; }
.edge-a { top: 60px; height: 828px; }
.edge-b { top: 948px; height: 828px; }
.edge-c { top: 1836px; height: 827px; }
.edge-d { top: 2724px; height: 828px; }
.track { position: absolute; right: 0; top: 0; width: 8px; height: 3552px; background: #f3f5fc; }
.thumb { position: absolute; left: 0; width: 8px; height: 222px; background: #c9cacd; border-radius: 4px; }
.thumb-a { top: 0; }
.thumb-b { top: 1110px; }
.thumb-c { top: 2220px; }
.thumb-d { top: 3330px; }
.ic { width: 14px; height: 14px; color: #c4c4c4; flex: none; }

.topbar { width: 921px; height: 60px; padding: 0 28px 0 20px; background: #fff; display: grid; grid-template-columns: 1fr auto 1fr; align-items: center; }
.menu { display: flex; flex-direction: column; gap: 8px; }
.menu i { width: 30px; height: 2px; background: #9fa9dc; }
.logo-main { font: 700 23px "Lato", sans-serif; fill: #3f51b5; }
.logo-sub { font: 700 8px "Lato", sans-serif; fill: #9fa9dc; }
.login { justify-self: end; font-size: 11px; color: #3f51b5; }

main { width: 921px; padding: 20px; }
.filters { display: flex; height: 40px; align-items: center; }
.select { width: 264px; height: 36px; margin-right: 17px; background: #fff; border: 1px solid #e3e7f5; border-radius: 3px; padding: 4px 10px 0; display: flex; justify-content: space-between; align-items: center; font-size: 14px; font-weight: 600; color: #14145a; }
.select i { border: 5px solid transparent; border-top-color: #999; border-bottom: 0; margin-top: -4px; }
.select + .purchase { margin-left: 11px; }
.purchase { width: 95px; height: 40px; border: 0; border-radius: 3px; background: #00c4aa; color: #fff; font: 700 14px "Open Sans", sans-serif; }

.card { background: #fff; border-radius: 4px; box-shadow: 0 1px 1px #cfd4ee; margin-top: 20px; overflow: hidden; }
.card h2 { font-size: 16px; line-height: 22px; color: #5b5b5b; }
.grade { height: 189px; padding: 14px 20px; }
.grade-body { display: flex; margin-top: 10px; }
.overall { flex: none; width: 150px; height: 127px; background: #f7f7f7; border-radius: 3px; display: flex; flex-direction: column; align-items: center; gap: 12px; padding-top: 7px; font-size: 14px; line-height: 19px; color: #8b8b8b; }
.grades { margin-left: 30px; padding-top: 4px; flex: none; }
.row { display: flex; align-items: center; height: 24px; }
.row span { flex: none; width: 105px; padding-left: 5px; font-size: 12px; font-weight: 300; color: #555; }
.bar { flex: none; width: 509px; height: 7px; border-radius: 4px; background: #eee; }
.bar i { display: block; height: 7px; border-radius: 4px; background: #3f51b5; }
.row b { width: 33px; padding-left: 3px; text-align: center; font-size: 12px; font-weight: 400; color: #777; }
.lk { width: 12px; height: 16px; margin-left: 12px; }

.kpis { display: grid; grid-template-columns: repeat(3, 1fr); gap: 14.500px; margin-top: 20px; }
.kpi { margin: 0; height: 179px; padding: 10px 10px; }
.kpi-head { display: flex; justify-content: space-between; padding-right: 10px; }
.kpi-head h2 { padding-top: 4px; }
.kpi-body { display: flex; justify-content: space-between; height: 100px; margin-top: 4px; }
.kpi-body strong { width: 70px; font-size: 24px; line-height: 33px; font-weight: 300; color: #3f51b5; padding-top: 33px; }
.kpi-body svg { margin-right: 4px; }
.spark { fill: none; stroke-width: 2; filter: drop-shadow(0 5px 2px rgba(0, 0, 0, .12)); }
.mk { font-size: 12px; fill: #3f51b5; text-anchor: middle; }
.more { display: flex; align-items: center; gap: 5px; margin-top: 6px; font-size: 12px; line-height: 16px; color: #3f51b5; }
.more svg { width: 16px; height: 8px; }
.u { text-decoration: underline; }

.map { position: relative; height: 788px; margin-top: 20px; border-radius: 4px; overflow: hidden; }
.rail { fill: none; stroke: #d4d4d8; stroke-width: 3; }
.minor { fill: none; stroke: #fff; stroke-width: 4.500; stroke-linejoin: round; }
.case, .core { fill: none; stroke-linecap: round; stroke-linejoin: round; }
.case { stroke: #f6cf65; stroke-width: 12; }
.core { stroke: #ffe59e; stroke-width: 7; }
.city { fill: rgba(63, 81, 181, .12); stroke: #4a59b6; stroke-width: 3.500; }
.dots { fill: none; stroke-width: 16; stroke-linecap: round; }
.shields text, .inter text { font: 26px Roboto, sans-serif; text-anchor: middle; fill: #4a4f57; transform: translateY(9px); }
.shields .bus { font-size: 19px; transform: translateY(7px); }
.inter text { font-weight: 700; fill: #fff; }
.places text { font: 36px Roboto, sans-serif; text-anchor: middle; fill: #50555d; stroke: #f3f3f3; stroke-width: 6px; paint-order: stroke; stroke-linejoin: round; }
.places .l { font-size: 46px; }
.places .l2 { font-size: 40px; }
.places .xl { font-size: 47px; font-weight: 500; fill: #3c4046; }
.places .hood text { font-size: 27px; font-weight: 700; fill: #8e9cb6; letter-spacing: 2px; stroke-width: 4px; }
.places .blue text { font-size: 41px; fill: #1a6fe0; }
.places .teal { font-size: 42px; fill: #128a8f; }
.places .green text { font-size: 41px; fill: #1f8a42; }
.places .road { font-size: 30px; fill: #7c5a2c; }
.google { font: 500 54px Roboto, sans-serif; fill: #fff; stroke: #aaa; stroke-width: 4px; paint-order: stroke; }
.toggle { position: absolute; left: 10px; top: 10px; width: 85px; height: 45px; border: 5px solid #fff; border-radius: 23px; background: #f0f0f0; box-shadow: 0 0 2px #bbb; display: flex; align-items: center; gap: 13px; }
.toggle span { width: 35px; height: 35px; border-radius: 50%; background: #3f51b5; display: grid; place-items: center; }
.full { position: absolute; left: 831px; top: 10px; width: 40px; height: 40px; border-radius: 2px; background: #fff; box-shadow: 0 1px 3px #bbb; display: grid; place-items: center; }
.legend { position: absolute; left: 837px; top: 60px; width: 30px; height: 116px; border-radius: 2px; background: #fff; }
.zoom { position: absolute; left: 831px; top: 354px; width: 40px; height: 81px; border-radius: 2px; background: #fff; box-shadow: 0 1px 3px #bbb; display: flex; flex-direction: column; align-items: center; }
.zoom span { height: 40px; font: 700 31px/38px "Open Sans", sans-serif; color: #666; }
.zoom i { width: 30px; height: 1px; background: #e6e6e6; }
.attrib { position: absolute; right: 0; bottom: 0; display: flex; gap: 12px; padding: 0 6px 0 5px; height: 14px; background: rgba(245, 245, 245, .8); font: 10px/14px Roboto, sans-serif; color: #333; }
.map + .card { margin-top: 26px; }

.head { display: flex; justify-content: space-between; padding: 0 20px; }
.head p { font-size: 14px; font-weight: 300; line-height: 20px; color: #999; text-align: right; }
.head .ic { display: inline-block; vertical-align: -1px; }
.head h2 .ic { margin-left: 7px; vertical-align: 0; }
.rentals { height: 308px; }
.banner { height: 71px; background: #efefef; display: flex; justify-content: space-between; align-items: center; padding: 0 20px; }
.banner h1 { font-size: 22px; font-weight: 300; color: #3f51b5; }
.banner .ic { color: #7c88cf; }
.rentals .head { padding-top: 17px; }
.rentals .chart { margin-top: 13px; }
.grid { fill: none; stroke: #f3f3f3; stroke-width: 1; }
.rail-h, .bars-h { stroke-width: 7; stroke-linecap: round; }
.rail-h, .rail-v { stroke: #eee; }
.rail-v, .bars-v { stroke-width: 10; stroke-linecap: round; }
.bars-v { stroke: #3f51b5; }
.ax text { font-size: 12px; font-weight: 300; fill: #444; }
.small text { font-size: 11.500px; }
.end text { text-anchor: end; }
.mid text { text-anchor: middle; }

.channel { height: 143px; padding: 17px 20px; }
.cols { display: flex; justify-content: center; gap: 30px; margin-top: 32px; }
.cols > div { width: 100px; display: flex; flex-direction: column; align-items: center; }
.src { width: 100px; height: 31px; border-bottom: 1px solid #ebebeb; display: flex; align-items: center; justify-content: center; font-size: 14px; padding-bottom: 3px; }
.cols b { font-size: 16px; line-height: 22px; margin-top: 2px; color: #4d4d4d; }
.airbnb { font: 900 14px "Lato", sans-serif; fill: #ff5a5f; }
.vrbo { font: italic 700 26px "Liberation Serif", serif; stroke-width: .8px; }

.size { height: 257px; padding-top: 17px; }
.size .chart { margin-top: 13px; }
.growth { height: 255px; padding-top: 17px; }
.growth .chart { margin-top: 18px; }
.amenities { height: 382px; padding-top: 17px; }
.amenities h2, .ratings h2, .settings h2 { padding-left: 20px; }
.amenities .chart { margin-top: 11px; }
.ratings { height: 277px; padding-top: 17px; }
.rate-body { display: flex; margin: 19px 0 0 245px; }
.rt text { font-size: 11.300px; fill: #6a6a6a; }
.scores { margin-left: 30px; padding-top: 33px; }
.scores p { font-size: 11px; line-height: 16px; margin-bottom: 21px; color: #666; }
.scores b { display: block; font-size: 16px; line-height: 24px; color: #4d4d4d; }
.activity { height: 237px; padding-top: 17px; }
.donuts { display: flex; justify-content: center; gap: 40px; margin-top: 18px; }
.ring circle { fill: none; stroke-width: 20; }
.cut { stroke: #fff; stroke-width: 1; }
.pct text { font-size: 10px; fill: #fff; text-anchor: middle; }
.dn { font-size: 20px; fill: #666; text-anchor: middle; }
.settings { height: 171px; padding-top: 17px; }
.settings h3 { font-size: 12px; line-height: 16px; color: #666; padding-left: 20px; margin-top: 19px; }
.stack + h3 { margin-top: 21px; }
.stack { display: flex; height: 20px; width: 839px; margin-left: 20px; }
.stack span { border: 1px solid rgba(255, 255, 255, .6); color: #fff; font-size: 10.500px; line-height: 17px; text-align: center; }
```
